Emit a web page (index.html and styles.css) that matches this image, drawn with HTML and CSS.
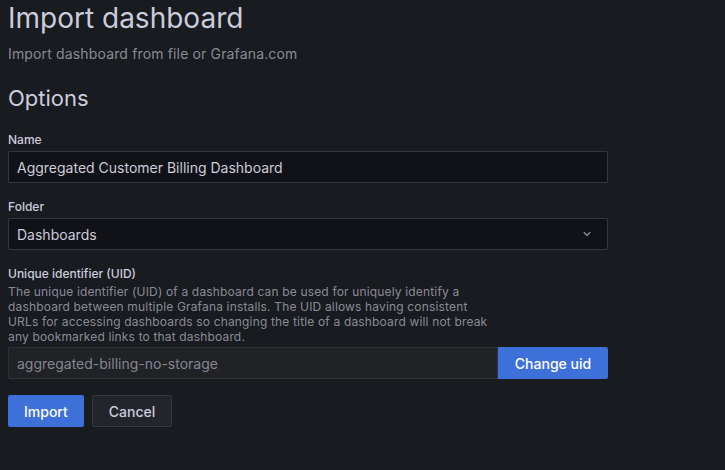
FILE: index.html
```html
<!DOCTYPE html>
<html lang="en">
<head>
    <meta charset="UTF-8">
    <meta name="viewport" content="width=device-width, initial-scale=1.0">
    <title>Import dashboard</title>
    <link rel="stylesheet" href="styles.css">
</head>
<body>
<div class="page">
    <h1 class="page-title">Import dashboard</h1>
    <div class="page-subtitle">Import dashboard from file or Grafana.com</div>

    <h3 class="section-title">Options</h3>

    <div class="field">
        <label class="field-label">Name</label>
        <div class="input">Aggregated Customer Billing Dashboard</div>
    </div>

    <div class="field">
        <label class="field-label">Folder</label>
        <div class="input select">
            <span>Dashboards</span>
            <svg class="caret" width="16" height="16" viewBox="0 0 24 24">
                <path d="M17 9.17a1 1 0 0 0-1.41 0L12 12.71 8.46 9.17a1 1 0 0 0-1.41 1.42l4.24 4.24a1 1 0 0 0 1.42 0L17 10.59a1 1 0 0 0 0-1.420z" fill="currentColor"/>
            </svg>
        </div>
    </div>

    <div class="field">
        <label class="field-label">Unique identifier (UID)</label>
        <div class="field-description">The unique identifier (UID) of a dashboard can be used for uniquely identify a dashboard between multiple Grafana installs. The UID allows having consistent URLs for accessing dashboards so changing the title of a dashboard will not break any bookmarked links to that dashboard.</div>
        <div class="input-group">
            <div class="input disabled">aggregated-billing-no-storage</div>
            <button class="btn btn-primary btn-addon">Change uid</button>
        </div>
    </div>

    <div class="actions">
        <button class="btn btn-primary">Import</button>
        <button class="btn btn-secondary">Cancel</button>
    </div>
</div>
</body>
</html>
```

FILE: styles.css
```css
body {
    font-family: 'Inter', 'Helvetica', 'Arial', sans-serif;
    background-color: #181b1f;
    color: #ccccdc;
    margin: 0;
    padding: 0 8px;
}

.page-title {
    font-size: 28px;
    font-weight: 400;
    line-height: 36px;
    margin: 0;
}

.page-subtitle {
    font-size: 14px;
    line-height: 20px;
    letter-spacing: 0.15px;
    margin-top: 8px;
    color: rgba(204, 204, 220, 0.65);
}

.section-title {
    font-size: 22px;
    font-weight: 400;
    line-height: 28px;
    margin: 20px 0 20px;
}

.field {
    width: 600px;
    margin-bottom: 16px;
}

.field-label {
    display: block;
    font-size: 12px;
    font-weight: 500;
    line-height: 16px;
    margin-bottom: 3px;
}

.field-description {
    font-size: 12px;
    line-height: 15px;
    letter-spacing: 0.16px;
    color: rgba(204, 204, 220, 0.65);
    max-width: 485px;
    margin-top: -1px;
    margin-bottom: 3px;
}

.input {
    box-sizing: border-box;
    height: 32px;
    padding: 0 8px;
    display: flex;
    align-items: center;
    font-size: 14px;
    background-color: #111217;
    border: 1px solid rgba(204, 204, 220, 0.2);
    border-radius: 2px;
}

.select {
    justify-content: space-between;
}

.caret {
    color: rgba(204, 204, 220, 0.65);
    margin-right: 4px;
}

.input-group {
    display: flex;
}

.input.disabled {
    flex: 1;
    background-color: #202226;
    border-color: rgba(204, 204, 220, 0.1);
    color: rgba(204, 204, 220, 0.6);
    border-radius: 2px 0 0 2px;
}

.btn {
    box-sizing: border-box;
    height: 32px;
    padding: 0 15px;
    font-family: inherit;
    font-size: 14px;
    font-weight: 500;
    border-radius: 2px;
    border: 1px solid transparent;
    cursor: pointer;
}

.btn-primary {
    background-color: #3d71d9;
    color: #fff;
}

.btn-addon {
    width: 110px;
    border-radius: 0 2px 2px 0;
}

.btn-secondary {
    background-color: #22252b;
    border-color: rgba(204, 204, 220, 0.12);
    color: #ccccdc;
    padding: 0 16px;
}

.actions {
    display: flex;
    gap: 8px;
    margin-top: 16px;
}
```
